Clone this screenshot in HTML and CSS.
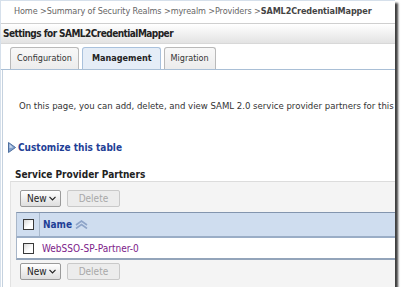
FILE: index.html
```html
<!DOCTYPE html>
<html>
<head>
<meta charset="utf-8">
<link rel="stylesheet" href="styles.css">
</head>
<body>
<div class="frame">
  <div class="crumbs">Home &gt;Summary of Security Realms &gt;myrealm &gt;Providers &gt;<b>SAML2CredentialMapper</b></div>
  <div class="title">Settings for SAML2CredentialMapper</div>
  <div class="tabs">
    <div class="tab">Configuration</div>
    <div class="tab active">Management</div>
    <div class="tab">Migration</div>
  </div>
  <div class="panel">
    <p class="intro">On this page, you can add, delete, and view SAML 2.0 service provider partners for this realm.</p>
    <div class="customize">
      <svg class="tri" width="8" height="11" viewBox="0 0 8 11"><polygon points="0.5,0.5 7.5,5.5 0.5,10.5" fill="#7f9fcc" stroke="#4e6f9f" stroke-width="1"/><polygon points="1.5,2 5,5.5 1.5,6" fill="#c9d8ee"/></svg>
      <span>Customize this table</span>
    </div>
    <div class="section-title">Service Provider Partners</div>
    <div class="tablebox">
      <div class="toolbar">
        <div class="btn">New<svg width="7" height="5" viewBox="0 0 7 5"><polyline points="0.5,0.8 3.5,3.8 6.5,0.8" fill="none" stroke="#222" stroke-width="1.2"/></svg></div>
        <div class="btn disabled">Delete</div>
      </div>
      <div class="row head">
        <div class="cbcell"><span class="cb"></span></div>
        <div class="namecell">Name <svg class="sort" width="13" height="9" viewBox="0 0 13 9"><polyline points="1,5 6.5,1 12,5" fill="none" stroke="#8ea4c8" stroke-width="1.6"/><polyline points="1,8.5 6.5,4.5 12,8.5" fill="none" stroke="#8ea4c8" stroke-width="1.6"/></svg></div>
      </div>
      <div class="row data">
        <div class="cbcell"><span class="cb"></span></div>
        <div class="namecell link">WebSSO-SP-Partner-0</div>
      </div>
      <div class="toolbar bottom">
        <div class="btn">New<svg width="7" height="5" viewBox="0 0 7 5"><polyline points="0.5,0.8 3.5,3.8 6.5,0.8" fill="none" stroke="#222" stroke-width="1.2"/></svg></div>
        <div class="btn disabled">Delete</div>
      </div>
    </div>
  </div>
</div>
</body>
</html>
```
FILE: styles.css
```css
html, body {
  margin: 0;
  padding: 0;
  background: #fff;
}
body {
  font-family: "DejaVu Sans Condensed", "DejaVu Sans", sans-serif;
  font-size: 9px;
  color: #222;
}
.frame {
  width: 395px;
  height: 287px;
  overflow: hidden;
  box-sizing: border-box;
  border-top: 1px solid #d6e0eb;
  border-left: 1px solid #d6e0eb;
  box-shadow: 3px 3px 2px rgba(0,0,0,0.75);
  display: flex;
  flex-direction: column;
  background: #fff;
}
.crumbs {
  height: 22px;
  line-height: 20px;
  padding-left: 13px;
  color: #666;
  white-space: nowrap;
  letter-spacing: -0.1px;
  border-bottom: 1px solid #cfcfcf;
}
.crumbs b {
  color: #444;
}
.title {
  height: 19px;
  line-height: 19px;
  padding-left: 2px;
  font-weight: bold;
  font-size: 10px;
  letter-spacing: -0.55px;
  color: #222;
  background: linear-gradient(#ffffff, #e3e3e3);
  border-bottom: 1px solid #d8d8d8;
  white-space: nowrap;
}
.tabs {
  display: flex;
  gap: 3px;
  padding-left: 9px;
  margin-top: 3px;
  border-bottom: 1px solid #a9bfd6;
}
.tab {
  height: 21px;
  line-height: 21px;
  padding: 0 6px;
  border: 1px solid #b9b9b9;
  border-bottom: none;
  border-radius: 3px 3px 0 0;
  background: linear-gradient(#f8f8f8, #ececec);
  color: #333;
  white-space: nowrap;
}
.tab.active {
  background: #e5edf7;
  border-color: #a9c1dc;
  font-weight: bold;
  color: #222;
  padding: 0 8px 0 9px;
}
.panel {
  flex: 1;
  margin-left: 1px;
  border-left: 1px solid #c5d2df;
  display: flex;
  flex-direction: column;
}
.intro {
  margin: 30px 0 0 16px;
  white-space: nowrap;
  color: #333;
  font-size: 9.5px;
}
.customize {
  margin: 31px 0 0 5px;
  display: flex;
  align-items: center;
  gap: 2px;
  font-weight: bold;
  font-size: 10px;
  color: #1f3f96;
}
.section-title {
  margin: 16px 0 0 12px;
  font-weight: bold;
  font-size: 10px;
  color: #222;
}
.tablebox {
  margin: 1px 0 0 7px;
  background: #f4f4f4;
  border-top: 1px solid #dcdcdc;
  border-left: 1px solid #e2e2e2;
  padding-left: 5px;
  flex: 1;
}
.toolbar {
  display: flex;
  gap: 6px;
  padding: 8px 0 5px 4px;
}
.toolbar.bottom {
  padding-top: 3px;
}
.btn {
  height: 17px;
  box-sizing: border-box;
  line-height: 15px;
  padding: 0 4px 0 6px;
  border: 1px solid #9a9a9a;
  border-radius: 2px;
  background: linear-gradient(#ffffff, #dedede);
  color: #222;
  display: flex;
  align-items: center;
  gap: 2px;
  font-size: 10px;
}
.btn.disabled {
  border-color: #c9c9c9;
  background: #ececec;
  color: #a8a8a8;
  padding: 0 11px;
}
.row {
  display: flex;
  border-left: 1px solid #a8b6c8;
}
.row.head {
  height: 23px;
  background: #cfddef;
  border-top: 1px solid #8395ae;
  border-bottom: 2px solid #9aadc6;
}
.row.data {
  height: 20px;
  background: #fff;
  border-bottom: 2px solid #93a4ba;
}
.cbcell {
  width: 22px;
  border-right: 1px solid #a9b9cc;
  display: flex;
  align-items: center;
  justify-content: center;
}
.row.data .cbcell {
  border-right: none;
}
.cb {
  width: 9px;
  height: 9px;
  border: 1px solid #3a3a3a;
  background: linear-gradient(135deg, #d8d8d8, #ffffff 60%);
  display: block;
}
.namecell {
  display: flex;
  align-items: center;
  gap: 3px;
  padding-left: 3px;
  font-weight: bold;
  font-size: 10px;
  color: #1f3f96;
}
.namecell.link {
  font-weight: normal;
  color: #7c2089;
}
```
